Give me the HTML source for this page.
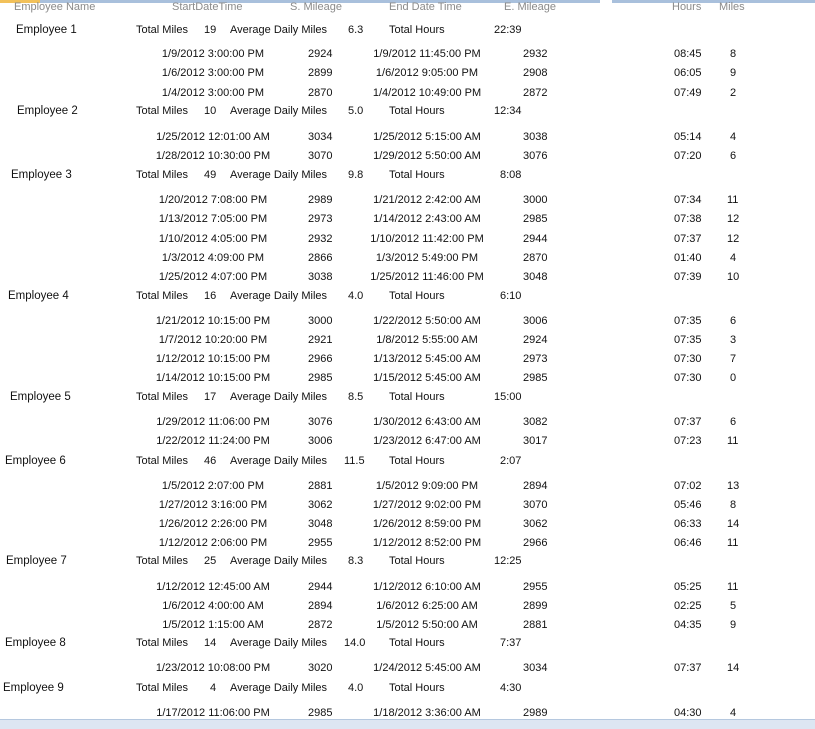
<!DOCTYPE html>
<html><head><meta charset="utf-8"><style>
body{margin:0;width:815px;height:728px;background:#fff;position:relative;overflow:hidden;font-family:"Liberation Sans",sans-serif;font-size:11px;color:#111;}
div{position:absolute;white-space:nowrap;line-height:14px;margin-top:1px;}
div.bar{margin-top:0;}
.h{color:#8a8a8a;margin-top:0;}
.c{transform:translateX(-50%);}
.n{font-size:11.5px;}
</style></head><body>
<div class="bar" style="left:0;top:0;width:600px;height:3px;background:#a9c0dc"></div>
<div class="bar" style="left:0;top:0;width:40px;height:3px;background:#f2c15a"></div>
<div class="bar" style="left:612px;top:0;width:203px;height:3px;background:#a9c0dc"></div>
<div class="bar" style="left:0;top:719px;width:815px;height:9px;background:#dde6f2;border-top:1px solid #b5c8df"></div>

<div class="h" style="left:14px;top:0">Employee Name</div>
<div class="h" style="left:172px;top:0">StartDateTime</div>
<div class="h" style="left:290px;top:0">S. Mileage</div>
<div class="h" style="left:389px;top:0">End Date Time</div>
<div class="h" style="left:504px;top:0">E. Mileage</div>
<div class="h" style="left:672px;top:0">Hours</div>
<div class="h" style="left:719px;top:0">Miles</div>

<!-- summaries -->
<div class="n" style="left:16px;top:22px">Employee 1</div>
<div style="left:136px;top:22px">Total Miles</div><div style="left:204px;top:22px">19</div><div style="left:230px;top:22px">Average Daily Miles</div><div style="left:348px;top:22px">6.3</div><div style="left:389px;top:22px">Total Hours</div><div style="left:494px;top:22px">22:39</div>
<div class="n" style="left:17px;top:103px">Employee 2</div>
<div style="left:136px;top:103px">Total Miles</div><div style="left:204px;top:103px">10</div><div style="left:230px;top:103px">Average Daily Miles</div><div style="left:348px;top:103px">5.0</div><div style="left:389px;top:103px">Total Hours</div><div style="left:494px;top:103px">12:34</div>
<div class="n" style="left:11px;top:167px">Employee 3</div>
<div style="left:136px;top:167px">Total Miles</div><div style="left:204px;top:167px">49</div><div style="left:230px;top:167px">Average Daily Miles</div><div style="left:348px;top:167px">9.8</div><div style="left:389px;top:167px">Total Hours</div><div style="left:500px;top:167px">8:08</div>
<div class="n" style="left:8px;top:288px">Employee 4</div>
<div style="left:136px;top:288px">Total Miles</div><div style="left:204px;top:288px">16</div><div style="left:230px;top:288px">Average Daily Miles</div><div style="left:348px;top:288px">4.0</div><div style="left:389px;top:288px">Total Hours</div><div style="left:500px;top:288px">6:10</div>
<div class="n" style="left:10px;top:389px">Employee 5</div>
<div style="left:136px;top:389px">Total Miles</div><div style="left:204px;top:389px">17</div><div style="left:230px;top:389px">Average Daily Miles</div><div style="left:348px;top:389px">8.5</div><div style="left:389px;top:389px">Total Hours</div><div style="left:494px;top:389px">15:00</div>
<div class="n" style="left:5px;top:453px">Employee 6</div>
<div style="left:136px;top:453px">Total Miles</div><div style="left:204px;top:453px">46</div><div style="left:230px;top:453px">Average Daily Miles</div><div style="left:344px;top:453px">11.5</div><div style="left:389px;top:453px">Total Hours</div><div style="left:500px;top:453px">2:07</div>
<div class="n" style="left:6px;top:553px">Employee 7</div>
<div style="left:136px;top:553px">Total Miles</div><div style="left:204px;top:553px">25</div><div style="left:230px;top:553px">Average Daily Miles</div><div style="left:348px;top:553px">8.3</div><div style="left:389px;top:553px">Total Hours</div><div style="left:494px;top:553px">12:25</div>
<div class="n" style="left:5px;top:635px">Employee 8</div>
<div style="left:136px;top:635px">Total Miles</div><div style="left:204px;top:635px">14</div><div style="left:230px;top:635px">Average Daily Miles</div><div style="left:344px;top:635px">14.0</div><div style="left:389px;top:635px">Total Hours</div><div style="left:500px;top:635px">7:37</div>
<div class="n" style="left:3px;top:680px">Employee 9</div>
<div style="left:136px;top:680px">Total Miles</div><div style="left:210px;top:680px">4</div><div style="left:230px;top:680px">Average Daily Miles</div><div style="left:348px;top:680px">4.0</div><div style="left:389px;top:680px">Total Hours</div><div style="left:500px;top:680px">4:30</div>

<!-- rows -->
<div class="c" style="left:213px;top:46px">1/9/2012 3:00:00 PM</div><div style="left:308px;top:46px">2924</div><div class="c" style="left:427px;top:46px">1/9/2012 11:45:00 PM</div><div style="left:523px;top:46px">2932</div><div style="left:674px;top:46px">08:45</div><div style="left:730px;top:46px">8</div>
<div class="c" style="left:213px;top:65px">1/6/2012 3:00:00 PM</div><div style="left:308px;top:65px">2899</div><div class="c" style="left:427px;top:65px">1/6/2012 9:05:00 PM</div><div style="left:523px;top:65px">2908</div><div style="left:674px;top:65px">06:05</div><div style="left:730px;top:65px">9</div>
<div class="c" style="left:213px;top:85px">1/4/2012 3:00:00 PM</div><div style="left:308px;top:85px">2870</div><div class="c" style="left:427px;top:85px">1/4/2012 10:49:00 PM</div><div style="left:523px;top:85px">2872</div><div style="left:674px;top:85px">07:49</div><div style="left:730px;top:85px">2</div>

<div class="c" style="left:213px;top:129px">1/25/2012 12:01:00 AM</div><div style="left:308px;top:129px">3034</div><div class="c" style="left:427px;top:129px">1/25/2012 5:15:00 AM</div><div style="left:523px;top:129px">3038</div><div style="left:674px;top:129px">05:14</div><div style="left:730px;top:129px">4</div>
<div class="c" style="left:213px;top:148px">1/28/2012 10:30:00 PM</div><div style="left:308px;top:148px">3070</div><div class="c" style="left:427px;top:148px">1/29/2012 5:50:00 AM</div><div style="left:523px;top:148px">3076</div><div style="left:674px;top:148px">07:20</div><div style="left:730px;top:148px">6</div>

<div class="c" style="left:213px;top:192px">1/20/2012 7:08:00 PM</div><div style="left:308px;top:192px">2989</div><div class="c" style="left:427px;top:192px">1/21/2012 2:42:00 AM</div><div style="left:523px;top:192px">3000</div><div style="left:674px;top:192px">07:34</div><div style="left:727px;top:192px">11</div>
<div class="c" style="left:213px;top:211px">1/13/2012 7:05:00 PM</div><div style="left:308px;top:211px">2973</div><div class="c" style="left:427px;top:211px">1/14/2012 2:43:00 AM</div><div style="left:523px;top:211px">2985</div><div style="left:674px;top:211px">07:38</div><div style="left:727px;top:211px">12</div>
<div class="c" style="left:213px;top:231px">1/10/2012 4:05:00 PM</div><div style="left:308px;top:231px">2932</div><div class="c" style="left:427px;top:231px">1/10/2012 11:42:00 PM</div><div style="left:523px;top:231px">2944</div><div style="left:674px;top:231px">07:37</div><div style="left:727px;top:231px">12</div>
<div class="c" style="left:213px;top:250px">1/3/2012 4:09:00 PM</div><div style="left:308px;top:250px">2866</div><div class="c" style="left:427px;top:250px">1/3/2012 5:49:00 PM</div><div style="left:523px;top:250px">2870</div><div style="left:674px;top:250px">01:40</div><div style="left:730px;top:250px">4</div>
<div class="c" style="left:213px;top:269px">1/25/2012 4:07:00 PM</div><div style="left:308px;top:269px">3038</div><div class="c" style="left:427px;top:269px">1/25/2012 11:46:00 PM</div><div style="left:523px;top:269px">3048</div><div style="left:674px;top:269px">07:39</div><div style="left:727px;top:269px">10</div>

<div class="c" style="left:213px;top:313px">1/21/2012 10:15:00 PM</div><div style="left:308px;top:313px">3000</div><div class="c" style="left:427px;top:313px">1/22/2012 5:50:00 AM</div><div style="left:523px;top:313px">3006</div><div style="left:674px;top:313px">07:35</div><div style="left:730px;top:313px">6</div>
<div class="c" style="left:213px;top:332px">1/7/2012 10:20:00 PM</div><div style="left:308px;top:332px">2921</div><div class="c" style="left:427px;top:332px">1/8/2012 5:55:00 AM</div><div style="left:523px;top:332px">2924</div><div style="left:674px;top:332px">07:35</div><div style="left:730px;top:332px">3</div>
<div class="c" style="left:213px;top:351px">1/12/2012 10:15:00 PM</div><div style="left:308px;top:351px">2966</div><div class="c" style="left:427px;top:351px">1/13/2012 5:45:00 AM</div><div style="left:523px;top:351px">2973</div><div style="left:674px;top:351px">07:30</div><div style="left:730px;top:351px">7</div>
<div class="c" style="left:213px;top:370px">1/14/2012 10:15:00 PM</div><div style="left:308px;top:370px">2985</div><div class="c" style="left:427px;top:370px">1/15/2012 5:45:00 AM</div><div style="left:523px;top:370px">2985</div><div style="left:674px;top:370px">07:30</div><div style="left:730px;top:370px">0</div>

<div class="c" style="left:213px;top:414px">1/29/2012 11:06:00 PM</div><div style="left:308px;top:414px">3076</div><div class="c" style="left:427px;top:414px">1/30/2012 6:43:00 AM</div><div style="left:523px;top:414px">3082</div><div style="left:674px;top:414px">07:37</div><div style="left:730px;top:414px">6</div>
<div class="c" style="left:213px;top:433px">1/22/2012 11:24:00 PM</div><div style="left:308px;top:433px">3006</div><div class="c" style="left:427px;top:433px">1/23/2012 6:47:00 AM</div><div style="left:523px;top:433px">3017</div><div style="left:674px;top:433px">07:23</div><div style="left:727px;top:433px">11</div>

<div class="c" style="left:213px;top:478px">1/5/2012 2:07:00 PM</div><div style="left:308px;top:478px">2881</div><div class="c" style="left:427px;top:478px">1/5/2012 9:09:00 PM</div><div style="left:523px;top:478px">2894</div><div style="left:674px;top:478px">07:02</div><div style="left:727px;top:478px">13</div>
<div class="c" style="left:213px;top:497px">1/27/2012 3:16:00 PM</div><div style="left:308px;top:497px">3062</div><div class="c" style="left:427px;top:497px">1/27/2012 9:02:00 PM</div><div style="left:523px;top:497px">3070</div><div style="left:674px;top:497px">05:46</div><div style="left:730px;top:497px">8</div>
<div class="c" style="left:213px;top:516px">1/26/2012 2:26:00 PM</div><div style="left:308px;top:516px">3048</div><div class="c" style="left:427px;top:516px">1/26/2012 8:59:00 PM</div><div style="left:523px;top:516px">3062</div><div style="left:674px;top:516px">06:33</div><div style="left:727px;top:516px">14</div>
<div class="c" style="left:213px;top:535px">1/12/2012 2:06:00 PM</div><div style="left:308px;top:535px">2955</div><div class="c" style="left:427px;top:535px">1/12/2012 8:52:00 PM</div><div style="left:523px;top:535px">2966</div><div style="left:674px;top:535px">06:46</div><div style="left:727px;top:535px">11</div>

<div class="c" style="left:213px;top:579px">1/12/2012 12:45:00 AM</div><div style="left:308px;top:579px">2944</div><div class="c" style="left:427px;top:579px">1/12/2012 6:10:00 AM</div><div style="left:523px;top:579px">2955</div><div style="left:674px;top:579px">05:25</div><div style="left:727px;top:579px">11</div>
<div class="c" style="left:213px;top:598px">1/6/2012 4:00:00 AM</div><div style="left:308px;top:598px">2894</div><div class="c" style="left:427px;top:598px">1/6/2012 6:25:00 AM</div><div style="left:523px;top:598px">2899</div><div style="left:674px;top:598px">02:25</div><div style="left:730px;top:598px">5</div>
<div class="c" style="left:213px;top:617px">1/5/2012 1:15:00 AM</div><div style="left:308px;top:617px">2872</div><div class="c" style="left:427px;top:617px">1/5/2012 5:50:00 AM</div><div style="left:523px;top:617px">2881</div><div style="left:674px;top:617px">04:35</div><div style="left:730px;top:617px">9</div>

<div class="c" style="left:213px;top:660px">1/23/2012 10:08:00 PM</div><div style="left:308px;top:660px">3020</div><div class="c" style="left:427px;top:660px">1/24/2012 5:45:00 AM</div><div style="left:523px;top:660px">3034</div><div style="left:674px;top:660px">07:37</div><div style="left:727px;top:660px">14</div>

<div class="c" style="left:213px;top:705px">1/17/2012 11:06:00 PM</div><div style="left:308px;top:705px">2985</div><div class="c" style="left:427px;top:705px">1/18/2012 3:36:00 AM</div><div style="left:523px;top:705px">2989</div><div style="left:674px;top:705px">04:30</div><div style="left:730px;top:705px">4</div>
</body></html>
